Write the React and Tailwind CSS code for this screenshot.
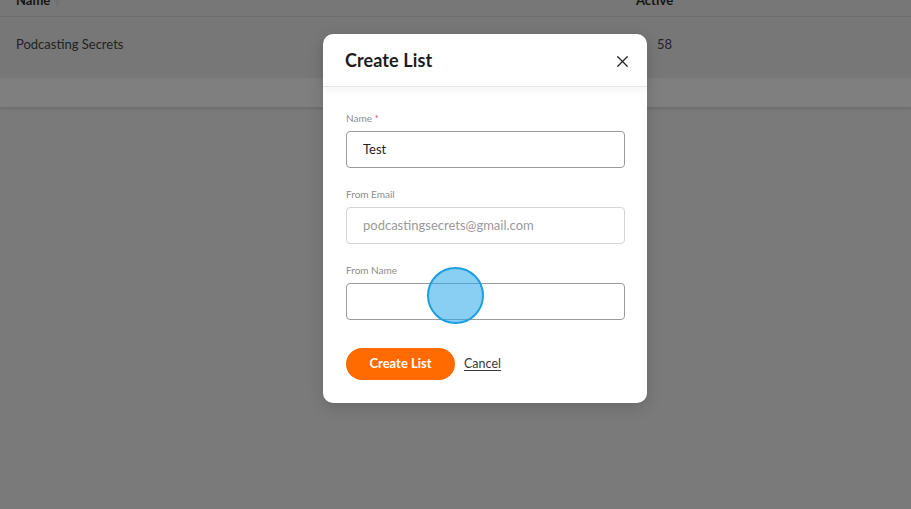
import { X } from "lucide-react";

export default function App() {
    return (
        <div
            className="relative w-[911px] h-[509px] overflow-hidden bg-[#7a7a7a]"
            style={{ fontFamily: "Lato, 'Open Sans', sans-serif" }}
        >
            {/* page behind the dim overlay */}
            <div className="bg-[#767776] border-b border-[#707070] shadow-[0_1px_2px_rgba(0,0,0,0.12)]">
                <div className="h-[17px] relative border-b border-[#6e6e6e]">
                    <span className="absolute left-[16px] top-[-9px] text-[13px] font-bold text-[#141414]">
                        Name <span className="text-[#6a6a6a] font-normal text-[10px]">↑</span>
                    </span>
                    <span className="absolute left-[636px] top-[-9px] text-[13px] font-bold text-[#141414]">
                        Active
                    </span>
                </div>
                <div className="h-[61px] flex items-center pb-[6px] text-[13px] text-[#232323]">
                    <div className="pl-[16px] w-[657px]">Podcasting Secrets</div>
                    <div>58</div>
                </div>
                <div className="h-[29px] bg-[#7f7f7f]"></div>
            </div>

            {/* modal */}
            <div className="absolute left-[323px] top-[34px] w-[324px] h-[369px] bg-white rounded-[10px] shadow-[0_4px_16px_rgba(0,0,0,0.15)] flex flex-col">
                <div className="h-[53px] flex items-center justify-between pl-[22px] pr-[15px] border-b border-[#e6e6e6] shadow-[0_4px_8px_rgba(0,0,0,0.04)] rounded-t-[10px]">
                    <h2 className="text-[18px] font-bold text-[#1c1c1c] tracking-[0.1px]">
                        Create List
                    </h2>
                    <X size={19} strokeWidth={1.5} className="text-[#222] mt-[2px]" />
                </div>
                <div className="px-[23px] pt-[24px] flex flex-col">
                    <label className="h-[14px] text-[10px] leading-[14px] text-[#8c8c8c]">
                        Name <span className="text-[#e0454f]">*</span>
                    </label>
                    <div className="mt-[6px] h-[37px] w-[279px] border border-[#9b9b9b] rounded-[4px] flex items-center pl-[16px] text-[13px] text-[#1f1f1f]">
                        Test
                    </div>

                    <label className="mt-[19px] h-[14px] text-[10px] leading-[14px] text-[#8c8c8c]">
                        From Email
                    </label>
                    <div className="mt-[6px] h-[37px] w-[279px] border border-[#d4d4d4] rounded-[4px] flex items-center pl-[16px] text-[13px] text-[#9a9a9a]">
                        podcastingsecrets@gmail.com
                    </div>

                    <label className="mt-[19px] h-[14px] text-[10px] leading-[14px] text-[#8c8c8c]">
                        From Name
                    </label>
                    <div className="mt-[6px] h-[37px] w-[279px] border border-[#9b9b9b] rounded-[4px]"></div>

                    <div className="mt-[28px] flex items-center gap-[9px]">
                        <button className="h-[32px] w-[109px] rounded-full bg-[#ff6b00] text-white text-[13px] font-bold">
                            Create List
                        </button>
                        <span className="text-[12.5px] text-[#3a3a3a] underline underline-offset-2">
                            Cancel
                        </span>
                    </div>
                </div>
            </div>

            {/* click indicator */}
            <div className="absolute left-[427px] top-[267px] w-[57px] h-[57px] rounded-full bg-[#28a8ea]/55 border-2 border-[#1b9fe0]"></div>
        </div>
    );
}
